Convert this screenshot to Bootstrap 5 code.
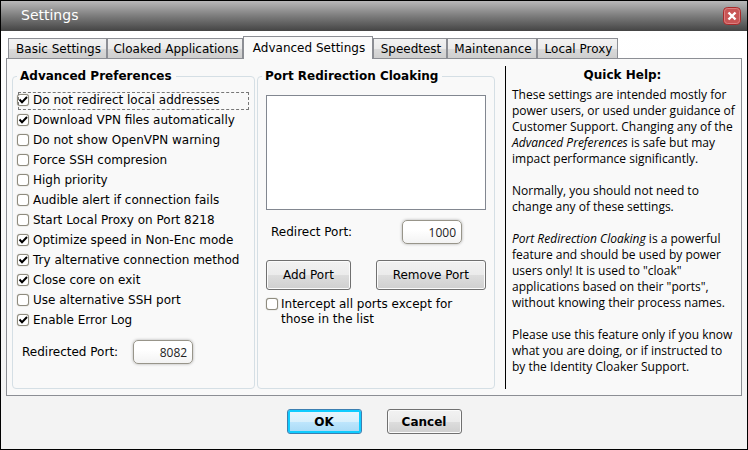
<!DOCTYPE html>
<html lang="en">
<head>
<meta charset="utf-8">
<meta name="viewport" content="width=device-width, initial-scale=1">
<title>Settings</title>
<link href="https://cdn.jsdelivr.net/npm/bootstrap@5.3.0/dist/css/bootstrap.min.css" rel="stylesheet">
<style>
body{font-family:"DejaVu Sans",sans-serif;font-size:12px;line-height:16px;color:#000}
.dialog{border:1px solid #000;background:linear-gradient(#fff 30px,#f3f3f3 400px)}
.titlebar{height:30px;padding:0 6px 0 20px;background:linear-gradient(#b9b8b9,#7c7c7c 50%,#444)}
.titlebar h1{font-size:14px;line-height:20px;padding-bottom:2px;color:#fff}
.close-btn{width:18px;height:18px}
.tabs{padding:5px 7px 0;display:grid;grid-template-columns:99px 136px 130px 74px 90px 81px}
.tab-btn{height:20px;margin-top:2px;padding:0 0 0 2px;border:1px solid #8c8e94;border-bottom:0;background:linear-gradient(#f2f2f2,#ebebeb 50%,#dadada 51%,#cfcfcf);white-space:nowrap;color:#000}
.tab-btn.active{height:23px;margin:0 0 -1px;background:#fafafa;z-index:1;padding-bottom:1px}
.pane{margin:0 5px;border:1px solid #8c8e94;background:#f9f9f9;padding:7px 8px 6px 5px;grid-template-columns:minmax(0,243fr) minmax(0,238fr) minmax(0,236fr);column-gap:2px}
.group{border:1px solid #d5dfe5;border-radius:4px;padding:0 4px}
.group legend{float:none;width:auto;margin:0;padding:0 4px 0 3px;font-size:12px;line-height:20px;font-weight:700;white-space:nowrap}
.opt{height:20px;padding-left:4px;gap:4px}
.opt-list{margin-left:-4px;padding-top:4px}
.opt.focused{position:relative}
.opt.focused::after{content:"";position:absolute;inset:2px 1px 0 5px;border:1px dashed #777;pointer-events:none}
.tick{appearance:none;flex:none;width:12px;height:12px;margin:0;border:1px solid #8e8b7e;border-radius:3px;background:#fff;box-shadow:0 0 1px #8e8b7e}
.tick:checked{background:#fff url("data:image/svg+xml,%3Csvg xmlns='http://www.w3.org/2000/svg' viewBox='0 0 10 10'%3E%3Cpath d='M1.5 4.5L4 7.2L9 2' fill='none' stroke='%23000' stroke-width='2'/%3E%3C/svg%3E") center/10px 10px no-repeat}
.port{width:60px;height:24px;border:1px solid #98958a;border-radius:5px;background:linear-gradient(#fff 40%,#f3f3f3);box-shadow:0 0 3px #aaa;padding:0 5px;text-align:right;font-family:"Open Sans",sans-serif;color:#222}
.port-row{padding:10px 0 0 5px;gap:15px}
.list-area{padding:9px 4px 0}
.ports{height:115px;resize:none;border:1px solid #828790;background:#fff;border-radius:0}
.push{border:1px solid #707070;border-radius:3px;background:linear-gradient(#f2f2f2,#ebebeb 50%,#dddddd 51%,#cfcfcf);box-shadow:inset 0 0 0 1px #fbfbfb;color:#000;padding:0}
.push.tall{height:30px;padding:0 16px}
.push.foot{width:75px;height:25px;font-weight:700}
.push.main{border-color:#3c7fb1;background:linear-gradient(#eaf6fd,#d9f0fc 50%,#bee6fd 51%,#a7d9f5);box-shadow:inset 0 0 0 2px #10ccff}
.intercept{padding-top:7px;gap:3px}
.intercept .tick{margin-top:1px}
.intercept span{line-height:15px}
.help{margin-left:8px;border-left:1px solid #000;padding-left:6px}
.help h2{font-size:12px;line-height:18px;font-weight:700;margin:0 0 3px}
.help p{font-family:"Open Sans",sans-serif;margin:0 0 16px;white-space:nowrap}
.actions{height:53px;gap:25px;padding-bottom:2px}
</style>
</head>
<body>
<main class="dialog min-vh-100 d-flex flex-column">
<header class="titlebar d-flex align-items-center justify-content-between">
<h1 class="m-0 fw-normal">Settings</h1>
<button type="button" class="close-btn border-0 bg-transparent p-0 d-flex" aria-label="Close"><svg width="18" height="18" viewBox="0 0 18 18"><rect x=".5" y=".5" width="17" height="17" rx="4" fill="#c85555" stroke="#a72a2a"/><rect x="1.5" y="1.5" width="15" height="15" rx="3" fill="none" stroke="#dc8080"/><path d="M5.5 5.5l7 7M12.500 5.500l-7 7" stroke="#fff" stroke-width="2.4"/></svg></button>
</header>
<div class="tabs" role="tablist">
<button type="button" role="tab" class="tab-btn">Basic Settings</button>
<button type="button" role="tab" class="tab-btn">Cloaked Applications</button>
<button type="button" role="tab" class="tab-btn active" aria-selected="true">Advanced Settings</button>
<button type="button" role="tab" class="tab-btn">Speedtest</button>
<button type="button" role="tab" class="tab-btn">Maintenance</button>
<button type="button" role="tab" class="tab-btn">Local Proxy</button>
</div>
<section class="pane d-grid flex-grow-1" role="tabpanel">
<fieldset class="group">
<legend>Advanced Preferences</legend>
<div class="opt-list">
<label class="opt d-flex align-items-center focused"><input class="tick" type="checkbox" checked>Do not redirect local addresses</label>
<label class="opt d-flex align-items-center"><input class="tick" type="checkbox" checked>Download VPN files automatically</label>
<label class="opt d-flex align-items-center"><input class="tick" type="checkbox">Do not show OpenVPN warning</label>
<label class="opt d-flex align-items-center"><input class="tick" type="checkbox">Force SSH compresion</label>
<label class="opt d-flex align-items-center"><input class="tick" type="checkbox">High priority</label>
<label class="opt d-flex align-items-center"><input class="tick" type="checkbox">Audible alert if connection fails</label>
<label class="opt d-flex align-items-center"><input class="tick" type="checkbox">Start Local Proxy on Port 8218</label>
<label class="opt d-flex align-items-center"><input class="tick" type="checkbox" checked>Optimize speed in Non-Enc mode</label>
<label class="opt d-flex align-items-center"><input class="tick" type="checkbox" checked>Try alternative connection method</label>
<label class="opt d-flex align-items-center"><input class="tick" type="checkbox" checked>Close core on exit</label>
<label class="opt d-flex align-items-center"><input class="tick" type="checkbox">Use alternative SSH port</label>
<label class="opt d-flex align-items-center"><input class="tick" type="checkbox" checked>Enable Error Log</label>
</div>
<div class="port-row d-flex align-items-center"><label for="redirected">Redirected Port:</label><input id="redirected" class="port" type="text" value="8082"></div>
</fieldset>
<fieldset class="group">
<legend>Port Redirection Cloaking</legend>
<div class="list-area">
<textarea class="ports d-block w-100" aria-label="Redirected ports"></textarea>
<div class="port-row d-flex align-items-center justify-content-between pe-4"><label for="redirect">Redirect Port:</label><input id="redirect" class="port" type="text" value="1000"></div>
<div class="d-flex justify-content-between pt-3"><button type="button" class="push tall">Add Port</button><button type="button" class="push tall">Remove Port</button></div>
<label class="intercept d-flex"><input class="tick" type="checkbox"><span>Intercept all ports except for<br>those in the list</span></label>
</div>
</fieldset>
<aside class="help">
<h2 class="text-center">Quick Help:</h2>
<p>These settings are intended mostly for<br>power users, or used under guidance of<br>Customer Support. Changing any of the<br><em>Advanced Preferences</em> is safe but may<br>impact performance significantly.</p>
<p>Normally, you should not need to<br>change any of these settings.</p>
<p><em>Port Redirection Cloaking</em> is a powerful<br>feature and should be used by power<br>users only! It is used to "cloak"<br>applications based on their "ports",<br>without knowing their process names.</p>
<p class="mb-0">Please use this feature only if you know<br>what you are doing, or if instructed to<br>by the Identity Cloaker Support.</p>
</aside>
</section>
<footer class="actions d-flex align-items-center justify-content-center"><button type="submit" class="push foot main">OK</button><button type="button" class="push foot">Cancel</button></footer>
</main>
<script src="https://cdn.jsdelivr.net/npm/bootstrap@5.3.0/dist/js/bootstrap.bundle.min.js"></script>
</body>
</html>
